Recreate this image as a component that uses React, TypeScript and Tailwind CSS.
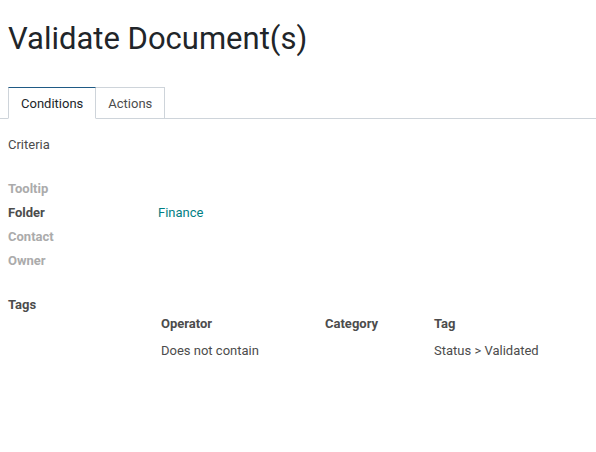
export default function App() {
  const fields = [
    { label: "Tooltip", value: "", muted: true },
    { label: "Folder", value: "Finance", muted: false },
    { label: "Contact", value: "", muted: true },
    { label: "Owner", value: "", muted: true },
  ];

  return (
    <div className="min-h-screen bg-white font-['Roboto',sans-serif] text-[13px] text-[#4c4c4c]">
      <h1 className="px-2 pt-[19px] text-[31px] leading-[40px] text-[#212529]">Validate Document(s)</h1>

      {/* Tabs */}
      <div className="mt-[28px] flex border-b border-[#ced4da] pl-2">
        <div className="-mb-px border border-[#ced4da] border-t-[#1f5a85] border-b-white bg-white px-[12px] pt-[7px] pb-[6px] leading-[17px] text-[#212529]">
          Conditions
        </div>
        <div className="border border-l-0 border-[#ced4da] border-b-0 px-[12px] pt-[7px] pb-[6px] leading-[17px] text-[#4c4c4c]">
          Actions
        </div>
      </div>

      <div className="px-2">
        <div className="pt-[17px] leading-[18px]">Criteria</div>

        {/* Fields */}
        <div className="mt-[23px]">
          {fields.map((f) => (
            <div key={f.label} className="flex h-6 items-center">
              <div className={`w-[150px] font-bold ${f.muted ? "text-[#ababab]" : "text-[#4c4c4c]"}`}>{f.label}</div>
              <div className="text-[#017e84]">{f.value}</div>
            </div>
          ))}
        </div>

        <div className="mt-[20px] font-bold leading-[24px]">Tags</div>

        {/* Tag rules */}
        <div className="-mt-1 ml-[150px] pl-[3px]">
          <div className="flex h-[22px] items-center font-bold">
            <div className="w-[164px]">Operator</div>
            <div className="w-[109px]">Category</div>
            <div>Tag</div>
          </div>
          <div className="mt-[5px] flex h-[22px] items-center">
            <div className="w-[164px]">Does not contain</div>
            <div className="w-[109px]"></div>
            <div>Status &gt; Validated</div>
          </div>
        </div>
      </div>
    </div>
  );
}
